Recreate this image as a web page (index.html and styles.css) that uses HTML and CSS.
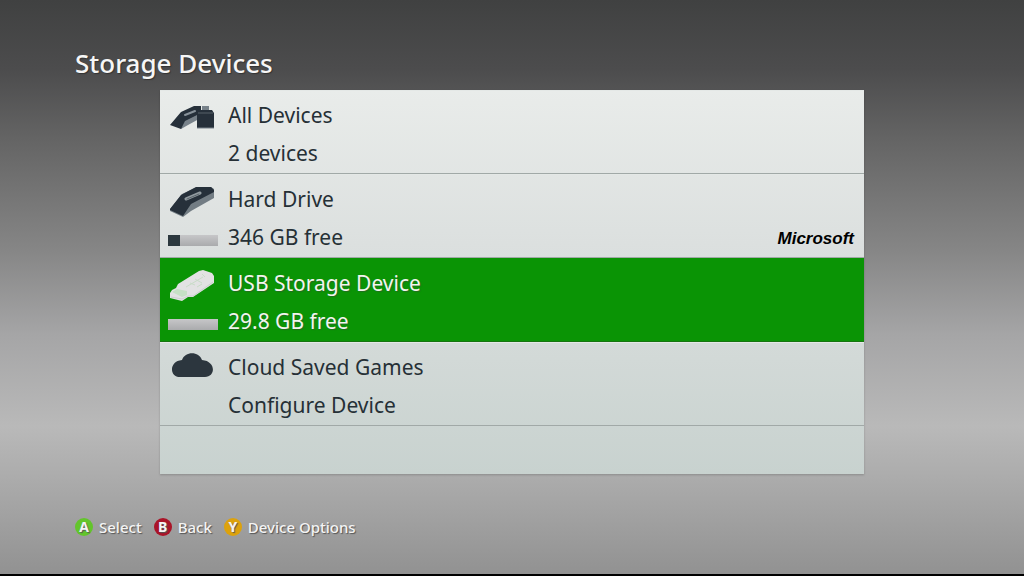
FILE: index.html
```html
<!DOCTYPE html>
<html lang="en">
    <head>
        <meta charset="utf-8">
        <meta name="viewport" content="width=device-width, initial-scale=1">
        <title>Storage Devices</title>
        <link rel="stylesheet" href="styles.css">
    </head>
    <body>
        <h1 class="title">Storage Devices</h1>
        <main class="panel">
            <button class="device" type="button">
                <span class="side">
                    <svg class="icon" viewBox="0 0 50 34" aria-hidden="true">
                        <path d="M2 24L13 11L26 5H33V15L21 21L13 28Z" fill="#26303a"/>
                        <path d="M13 28L17 20L31 13V18L20 24Z" fill="#78828a"/>
                        <path d="M17 14L27 10" stroke="#88929a" stroke-width="2" stroke-linecap="round"/>
                        <path d="M34 5H41V9H34Z" fill="#78828a"/>
                        <path d="M30 9H44L46 12V27H29V12Z" fill="#26303a"/>
                        <path d="M30 12H45" stroke="#566169" stroke-width="1"/>
                        <path d="M29 27H46" stroke="#78828a" stroke-width="1"/>
                    </svg>
                </span>
                <span class="info">
                    <span class="name">All Devices</span>
                    <span class="detail">2 devices</span>
                </span>
            </button>
            <button class="device" type="button">
                <span class="side">
                    <svg class="icon" viewBox="0 0 50 34" aria-hidden="true">
                        <path d="M2 24L14 9L29 2H43L46 4V13L23 26L15 32L2 26Z" fill="#737d84"/>
                        <path d="M2 24L13 10L28 2H43L46 5V7L23 19L15 31L2 25Z" fill="#26303a"/>
                        <path d="M18 14L32 8" stroke="#929ba0" stroke-width="3" stroke-linecap="round"/>
                        <path d="M19 14L31 9" stroke="#59646b" stroke-width="1" stroke-linecap="round"/>
                    </svg>
                    <span class="bar"><span class="used" style="width: 24%"></span></span>
                </span>
                <span class="info">
                    <span class="name">Hard Drive</span>
                    <span class="detail">346 GB free</span>
                </span>
                <span class="brand">Microsoft</span>
            </button>
            <button class="device selected" type="button">
                <span class="side">
                    <svg class="icon" viewBox="0 0 50 34" aria-hidden="true">
                        <path d="M2 24L4 21L8 19L10 15L31 2L35 1L44 4L46 7V14L25 28H20L14 32L2 29Z" fill="#e2e2e3"/>
                        <path d="M4 23L9 20L19 22V26L14 28Z" fill="#c6e0c5"/>
                        <path d="M3 28L14 30L20 27H25L45 13" fill="none" stroke="#cdcfd0" stroke-width="1"/>
                        <path d="M18 18L35 8M22 14L27 16M27 10L34 14M34 5L37 8M29 18L34 15" fill="none" stroke="#c9dcc8" stroke-width="1"/>
                    </svg>
                    <span class="bar"></span>
                </span>
                <span class="info">
                    <span class="name">USB Storage Device</span>
                    <span class="detail">29.8 GB free</span>
                </span>
            </button>
            <button class="device" type="button">
                <span class="side">
                    <svg class="icon" viewBox="0 0 50 34" aria-hidden="true">
                        <path d="M12 24C1 24 1 8 14 7C17 -2 31 -2 34 7C48 8 48 24 37 24Z" fill="#2c363e"/>
                    </svg>
                </span>
                <span class="info">
                    <span class="name">Cloud Saved Games</span>
                    <span class="detail">Configure Device</span>
                </span>
            </button>
        </main>
        <footer class="actions">
            <button class="action" type="button"><span class="key green">A</span>Select</button>
            <button class="action" type="button"><span class="key red">B</span>Back</button>
            <button class="action" type="button"><span class="key yellow">Y</span>Device Options</button>
        </footer>
    </body>
</html>
```
FILE: styles.css
```css
* {
    box-sizing: border-box;
}
body {
    margin: 0;
    min-height: 100vh;
    padding: 46px 75px 0;
    font-family: "Noto Sans", "Open Sans", sans-serif;
    background: linear-gradient(#404141, #4c4c4d 12%, #646464 24%, #858585 43%, #a5a5a6 58%, #b9b9b9 74%, #aaaaaa 84%, #919191);
    border-bottom: 2px solid #000;
}
button {
    margin: 0;
    border: none;
    background: none;
    font-family: inherit;
    text-align: left;
    cursor: pointer;
}
.title {
    margin: 0 0 10px;
    font-size: 26px;
    line-height: 34px;
    font-weight: 500;
    color: #f6f6f6;
    text-shadow: 1px 1px 1px #333;
}
.panel {
    margin: 0 85px;
    padding-bottom: 48px;
    background: linear-gradient(#e9ecea, #dce0df 40%, #c8d2cf);
    box-shadow: 0 1px 2px rgba(0, 0, 0, 0.2);
}
.device {
    display: flex;
    width: 100%;
    min-height: 84px;
    padding: 6px 8px 0;
    border-bottom: 1px solid #a1a9a7;
    box-shadow: inset 0 1px #e4e8e6;
    color: #263036;
}
.selected {
    background-color: #0a9405;
    border-color: #167510;
    box-shadow: none;
    color: #f2f5ef;
}
.side {
    width: 50px;
    margin-right: 10px;
    padding-top: 5px;
}
.icon {
    display: block;
    width: 50px;
    height: 34px;
}
.bar {
    display: block;
    height: 11px;
    margin-top: 16px;
    background: linear-gradient(#c6c6c8, #aaabad);
}
.used {
    display: block;
    height: 100%;
    background-color: #2c383e;
}
.info {
    flex: 1;
}
.name, .detail {
    display: block;
    font-size: 21px;
    line-height: 38px;
}
.selected .info {
    text-shadow: 1px 1px 1px #246c20;
}
.brand {
    align-self: flex-end;
    padding: 0 2px 8px 0;
    font-family: "Liberation Sans", Arial, sans-serif;
    font-size: 17px;
    line-height: 20px;
    font-weight: bold;
    font-style: italic;
    color: #000;
}
.actions {
    display: flex;
    gap: 12px;
    padding: 42px 0 20px;
}
.action {
    display: flex;
    align-items: center;
    gap: 6px;
    padding: 0;
    font-size: 15px;
    line-height: 22px;
    font-weight: 500;
    color: #f4f4f4;
    text-shadow: 1px 1px 1px #555;
}
.key {
    width: 18px;
    height: 18px;
    border-radius: 50%;
    font-size: 14px;
    line-height: 18px;
    font-weight: bold;
    text-align: center;
}
.green {
    background-color: #63c52b;
}
.red {
    background-color: #aa1428;
}
.yellow {
    background-color: #dda20c;
}
```
